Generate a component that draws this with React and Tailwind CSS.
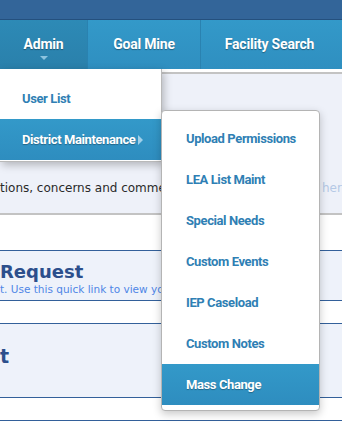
import React from "react";

const navFont = { fontFamily: '"Liberation Sans Narrow", "Roboto", "Liberation Sans", sans-serif' };

const subItems = [
  "Upload Permissions",
  "LEA List Maint",
  "Special Needs",
  "Custom Events",
  "IEP Caseload",
  "Custom Notes",
  "Mass Change",
];

export default function App() {
  return (
    <div className="relative w-[342px] h-[424px] overflow-hidden bg-white" style={{ fontFamily: '"DejaVu Sans", Verdana, sans-serif' }}>
      {/* top bar */}
      <div className="h-[19px] bg-[#336599]" />
      <div className="h-px bg-[#24507e]" />

      {/* main nav */}
      <div className="flex h-[49px] bg-gradient-to-b from-[#3399c9] to-[#2f8fc0] text-white font-bold text-[14px] tracking-[-0.2px] [text-shadow:0_1px_1px_rgba(0,0,0,0.35)]" style={navFont}>
        <div className="relative w-[88px] flex items-center justify-center bg-gradient-to-b from-[#2d8ab6] to-[#2a80ab] border-r border-[#2a82b0] pb-[1px]">
          <span>Admin</span>
          <span className="absolute left-[40px] top-[36px] w-0 h-0 border-l-[4px] border-r-[4px] border-t-[4px] border-l-transparent border-r-transparent border-t-[#8cc3df]" />
        </div>
        <div className="w-[113px] flex items-center justify-center border-r border-[#2a82b0] pb-[1px]">Goal Mine</div>
        <div className="flex-1 flex items-center justify-center pr-[4px] pb-[1px]">Facility Search</div>
      </div>

      {/* content */}
      <div className="h-[3px] bg-white" />
      <div className="h-[2px] bg-[#c3c3c3]" />
      <div className="h-[139px] bg-[#eef1f9] flex items-end pb-[16px] text-[12px]">
        <span className="w-[162px] whitespace-nowrap overflow-hidden text-[#2a2a2a]">tions, concerns and comments</span>
        <span className="flex-1" />
        <span className="w-[20px] whitespace-nowrap text-[#b5c9e6]">her</span>
      </div>
      <div className="h-[2px] bg-[#c3c3c3]" />
      <div className="h-[35px] bg-white" />
      <div className="h-px bg-[#33609a]" />
      <div className="h-[49px] bg-[#eef2fa] flex flex-col justify-center pt-[5px]">
        <div className="text-[18px] leading-[22px] font-bold text-[#2c4f8c] whitespace-nowrap">Request</div>
        <div className="w-[162px] overflow-hidden text-[10.5px] leading-[13px] text-[#4f86e6] whitespace-nowrap">t. Use this quick link to view your requests</div>
      </div>
      <div className="h-px bg-[#33609a]" />
      <div className="h-[22px] bg-white" />
      <div className="h-px bg-[#33609a]" />
      <div className="h-[73px] bg-[#eef2fa] flex items-center">
        <div className="text-[19px] font-bold text-[#2c4f8c] pb-[8px]">t</div>
      </div>
      <div className="h-px bg-[#33609a]" />
      <div className="h-[22px] bg-white" />
      <div className="h-px bg-[#33609a]" />

      {/* admin dropdown */}
      <div className="absolute left-0 top-[69px] w-[162px] bg-white border-r border-b border-[#b9b9b9] shadow-[2px_3px_8px_rgba(0,0,0,0.25)] pt-[9px] pb-[1px] font-bold text-[13px] tracking-[-0.4px]" style={navFont}>
        <div className="h-[41px] flex items-center pl-[22px] text-[#2f7fb4]">User List</div>
        <div className="h-[41px] flex items-center pl-[22px] bg-gradient-to-b from-[#3399c9] to-[#2e8dbf] text-white [text-shadow:0_1px_1px_rgba(0,0,0,0.3)]">
          <span>District Maintenance</span>
          <span className="ml-[3px] w-0 h-0 border-t-[5px] border-b-[5px] border-l-[5px] border-t-transparent border-b-transparent border-l-[#9fd0ea]" />
        </div>
      </div>

      {/* sub menu */}
      <div className="absolute left-[161px] top-[110px] w-[159px] bg-white border border-[#b4b4b4] rounded-[4px] shadow-[0_3px_9px_rgba(0,0,0,0.22)] pt-[7px] pb-[5px] font-bold text-[13px] tracking-[-0.4px]" style={navFont}>
        {subItems.map((item) => (
          <div
            key={item}
            className={
              item === "Mass Change"
                ? "h-[41px] flex items-center pl-[24px] bg-gradient-to-b from-[#3399c9] to-[#2e8dbf] text-white [text-shadow:0_1px_1px_rgba(0,0,0,0.3)]"
                : "h-[41px] flex items-center pl-[24px] text-[#2f7fb4]"
            }
          >
            {item}
          </div>
        ))}
      </div>
    </div>
  );
}
